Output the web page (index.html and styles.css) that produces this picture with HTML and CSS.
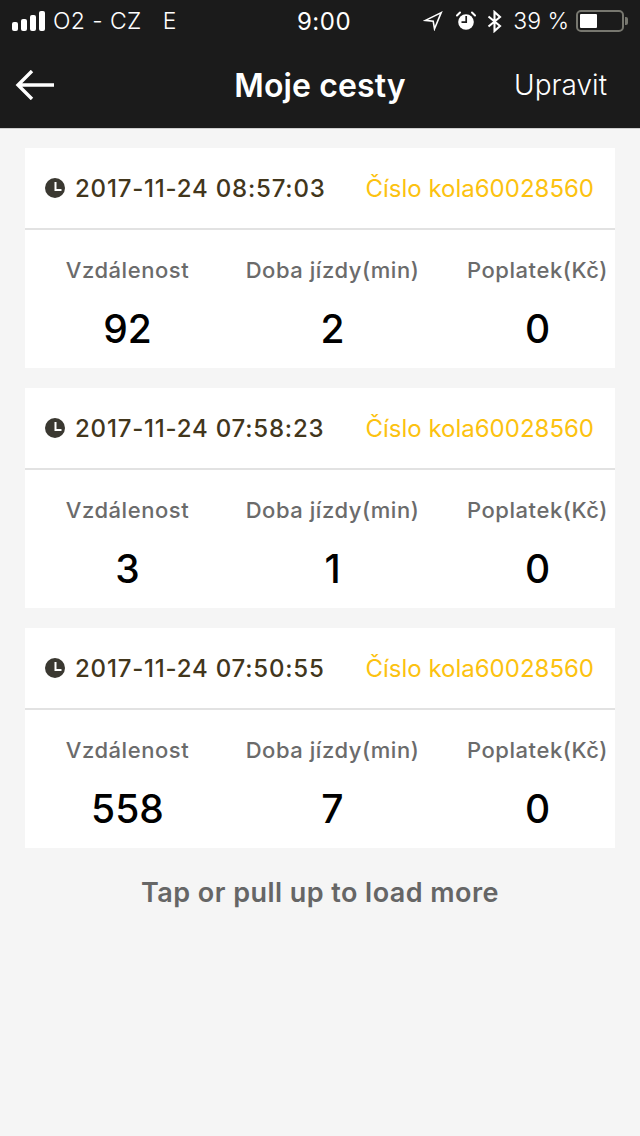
FILE: index.html
```html
<!DOCTYPE html>
<html lang="cs">
<head>
    <meta charset="UTF-8">
    <meta name="viewport" content="width=device-width, initial-scale=1.0">
    <title>Moje cesty</title>
    <link rel="stylesheet" href="styles.css">
</head>
<body>
    <header class="topbar">
        <div class="status">
            <div class="status-left">
                <span class="signal"><i></i><i></i><i></i><i></i></span>
                <span class="carrier">O2 - CZ</span>
                <span class="network">E</span>
            </div>
            <div class="status-time">9:00</div>
            <div class="status-right">
                <svg class="ico-loc" width="20" height="20" viewBox="0 0 20 20"><path d="M18.2 1.6 L2.5 9.4 L10.2 10.2 L11.5 17.8 Z" fill="none" stroke="#fff" stroke-width="1.6"/></svg>
                <svg class="ico-alarm" width="20" height="20" viewBox="0 0 20 20"><circle cx="10" cy="11" r="7.8" fill="#fff"/><path d="M10.2 5v6.2H5.5" fill="none" stroke="#1b1b1b" stroke-width="1.7"/><path d="M1 4.5 L4 1.5 M19 4.5 L16 1.5" stroke="#fff" stroke-width="2" stroke-linecap="round"/></svg>
                <svg class="ico-bt" width="15" height="23" viewBox="0 0 15 23"><path d="M1.5 6.5 L13 16 L7.5 21 V2 L13 7 L1.5 16.5" fill="none" stroke="#fff" stroke-width="2.1"/></svg>
                <span class="percent">39 %</span>
                <span class="battery"><b></b></span>
                <span class="battery-tip"></span>
            </div>
        </div>
        <nav class="nav">
            <a class="nav-back" href="#">
                <svg width="40" height="30" viewBox="0 0 40 30"><path d="M39 15 H3 M17 1 L3 15 L17 29" fill="none" stroke="#fff" stroke-width="3.4"/></svg>
            </a>
            <h1>Moje cesty</h1>
            <a class="nav-edit" href="#">Upravit</a>
        </nav>
    </header>

    <main class="list">
        <section class="card">
            <div class="card-head">
                <div class="date">
                    <svg class="clock" width="20" height="20" viewBox="0 0 20 20"><circle cx="10" cy="10" r="10" fill="#3a3831"/><path d="M10.5 4V12H16.5" fill="none" stroke="#fff" stroke-width="2"/></svg>
                    2017-11-24 08:57:03
                </div>
                <div class="bike">Číslo kola60028560</div>
            </div>
            <div class="stats">
                <div class="stat"><span>Vzdálenost</span><strong>92</strong></div>
                <div class="stat"><span>Doba jízdy(min)</span><strong>2</strong></div>
                <div class="stat"><span>Poplatek(Kč)</span><strong>0</strong></div>
            </div>
        </section>
        <section class="card">
            <div class="card-head">
                <div class="date">
                    <svg class="clock" width="20" height="20" viewBox="0 0 20 20"><circle cx="10" cy="10" r="10" fill="#3a3831"/><path d="M10.5 4V12H16.5" fill="none" stroke="#fff" stroke-width="2"/></svg>
                    2017-11-24 07:58:23
                </div>
                <div class="bike">Číslo kola60028560</div>
            </div>
            <div class="stats">
                <div class="stat"><span>Vzdálenost</span><strong>3</strong></div>
                <div class="stat"><span>Doba jízdy(min)</span><strong>1</strong></div>
                <div class="stat"><span>Poplatek(Kč)</span><strong>0</strong></div>
            </div>
        </section>
        <section class="card">
            <div class="card-head">
                <div class="date">
                    <svg class="clock" width="20" height="20" viewBox="0 0 20 20"><circle cx="10" cy="10" r="10" fill="#3a3831"/><path d="M10.5 4V12H16.5" fill="none" stroke="#fff" stroke-width="2"/></svg>
                    2017-11-24 07:50:55
                </div>
                <div class="bike">Číslo kola60028560</div>
            </div>
            <div class="stats">
                <div class="stat"><span>Vzdálenost</span><strong>558</strong></div>
                <div class="stat"><span>Doba jízdy(min)</span><strong>7</strong></div>
                <div class="stat"><span>Poplatek(Kč)</span><strong>0</strong></div>
            </div>
        </section>
        <p class="more">Tap or pull up to load more</p>
    </main>
</body>
</html>
```

FILE: styles.css
```css
* {
    box-sizing: border-box;
}
html, body {
    height: 100%;
}
body {
    font-family: Inter, "Liberation Sans", sans-serif;
    background-color: #f5f5f5;
    margin: 0;
    overflow: hidden;
}
.topbar {
    background-color: #1b1b1b;
    color: white;
    height: 129px;
    border-bottom: 1px solid #cfcfcf;
}
.status {
    height: 42px;
    display: grid;
    grid-template-columns: 1fr auto 1fr;
    align-items: center;
    padding: 0 12px;
    font-size: 23px;
}
.status-left {
    display: flex;
    align-items: center;
}
.signal {
    display: flex;
    align-items: flex-end;
    gap: 3px;
    height: 20px;
    margin-right: 8px;
}
.signal i {
    display: block;
    width: 6px;
    border-radius: 2px;
    background: white;
}
.signal i:nth-child(1) { height: 9px; }
.signal i:nth-child(2) { height: 12px; }
.signal i:nth-child(3) { height: 16px; }
.signal i:nth-child(4) { height: 20px; }
.carrier {
    font-weight: 300;
    letter-spacing: 0.4px;
}
.network {
    font-weight: 300;
    margin-left: 21px;
}
.status-time {
    font-weight: 400;
    font-size: 24px;
    letter-spacing: 0.5px;
    margin-left: 8px;
}
.status-right {
    display: flex;
    align-items: center;
    justify-content: flex-end;
}
.ico-loc {
    margin-right: 13px;
}
.ico-alarm {
    margin-right: 11px;
}
.ico-bt {
    margin-right: 11px;
}
.percent {
    font-weight: 300;
    margin-right: 7px;
}
.battery {
    display: block;
    width: 48px;
    height: 22px;
    border: 2px solid #77776f;
    border-radius: 5px;
    padding: 2px;
}
.battery b {
    display: block;
    width: 17px;
    height: 14px;
    background: white;
    border-radius: 1px;
}
.battery-tip {
    display: block;
    width: 3px;
    height: 8px;
    margin-left: 1px;
    background: #77776f;
    border-radius: 0 2px 2px 0;
}
.nav {
    height: 86px;
    display: grid;
    grid-template-columns: 1fr auto 1fr;
    align-items: center;
    padding: 0 15px;
}
.nav h1 {
    margin: 0;
    font-size: 32px;
    font-weight: 600;
    letter-spacing: 0.1px;
}
.nav-back {
    display: flex;
}
.nav-edit {
    justify-self: end;
    margin-right: 18px;
    color: white;
    text-decoration: none;
    font-size: 28px;
    font-weight: 300;
}
.list {
    padding: 19px 25px 0;
}
.card {
    background: white;
    height: 220px;
    margin-bottom: 20px;
}
.card-head {
    height: 82px;
    border-bottom: 2px solid #e2e2e2;
    display: flex;
    align-items: center;
    justify-content: space-between;
    padding: 1px 21px 0 20px;
}
.date {
    display: flex;
    align-items: center;
    gap: 10px;
    font-size: 24px;
    font-weight: 500;
    letter-spacing: 0.8px;
    color: #42361c;
}
.clock {
    margin-bottom: 2px;
}
.bike {
    font-size: 24px;
    color: #fcc210;
}
.stats {
    display: grid;
    grid-template-columns: 205px 205px 205px;
    padding-top: 27px;
}
.stat {
    display: flex;
    flex-direction: column;
    align-items: center;
}
.stat span {
    font-size: 22px;
    font-weight: 500;
    letter-spacing: 0.55px;
    color: #6b6b6b;
    white-space: nowrap;
}
.stat strong {
    margin-top: 22px;
    font-size: 39px;
    font-weight: 500;
    color: black;
}
.more {
    margin: 0;
    text-align: center;
    font-size: 27px;
    font-weight: 600;
    letter-spacing: 0.45px;
    color: #666;
    padding-top: 8px;
}
```
